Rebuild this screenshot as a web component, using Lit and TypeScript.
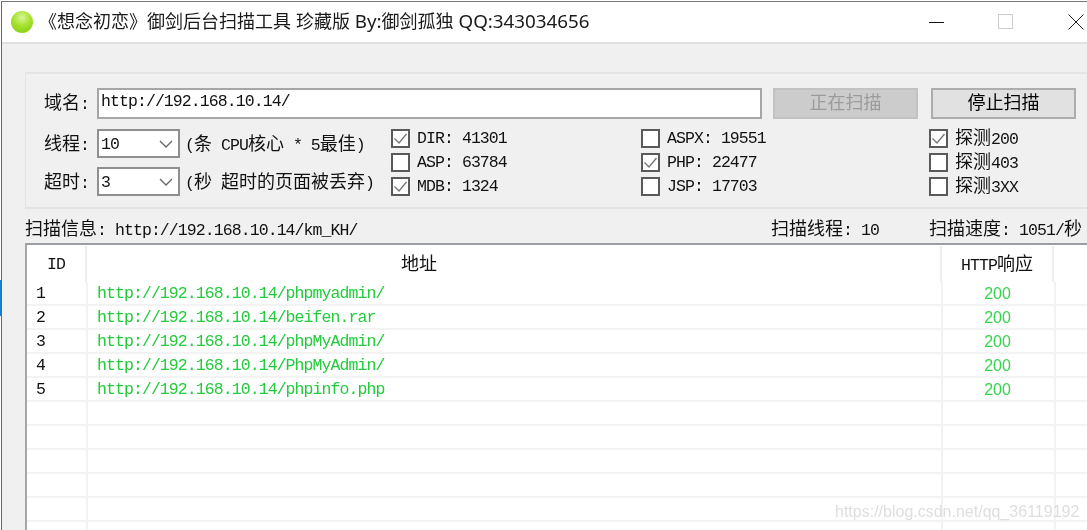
import { LitElement, html, css, svg } from "lit";
import { customElement } from "lit/decorators.js";

const split = (s: string, latin: string) =>
  s.split(/([\x00-\x7f]+)/).filter(Boolean).map((r) =>
    /^[\x00-\x7f]/.test(r) ? html`<span class=${latin}>${r}</span>` : html`<span class="c">${r}</span>`
  );
const runs = (s: string) => html`<span class="run">${split(s, "l")}</span>`;
const titleRuns = (s: string) => html`<span class="run">${split(s, "tl")}</span>`;

const chevron = svg`<svg class="chev" width="14" height="8" viewBox="0 0 14 8"><path d="M1 1 L7 7 L13 1" fill="none" stroke="#666" stroke-width="1.3"/></svg>`;
const tick = svg`<svg width="15" height="15" viewBox="0 0 15 15"><path d="M1.5 7.5 L6 12 L13.5 3" fill="none" stroke="#777" stroke-width="1.4"/></svg>`;

const rows = [
  ["1", "http://192.168.10.14/phpmyadmin/", "200"],
  ["2", "http://192.168.10.14/beifen.rar", "200"],
  ["3", "http://192.168.10.14/phpMyAdmin/", "200"],
  ["4", "http://192.168.10.14/PhpMyAdmin/", "200"],
  ["5", "http://192.168.10.14/phpinfo.php", "200"],
  ...Array.from({ length: 6 }, () => ["", "", ""]),
];

@customElement("app-root")
export class AppRoot extends LitElement {
  static styles = css`
    :host { display: block; position: relative; width: 1087px; height: 530px; overflow: hidden; background: #fff; }
    .run { display: block; line-height: 20px; font-size: 15px; white-space: pre; }
    .l { font: 16.5px/1 "Liberation Mono", monospace; letter-spacing: -0.92px; }
    .c { font: 18px/1 "Noto Sans CJK SC", sans-serif; }
    .tl { font: 18.8px/1 "Noto Sans", sans-serif; }
    .window { margin-left: 1px; border-left: 1px solid #666; border-top: 1px solid #777; margin-top: 1px; height: 529px; background: #f0f0f0; box-sizing: border-box; color: #111; line-height: 24px; filter: blur(0.35px); }
    .edge { position: absolute; left: 0; top: 280px; width: 1px; height: 36px; background: #1a7fd0; }
    .title { height: 40px; background: #fff; border-bottom: 2px solid #e0e0e0; display: flex; align-items: center; padding-left: 9px; box-sizing: content-box; }
    .orb { width: 22px; height: 22px; border-radius: 50%; background: radial-gradient(circle at 50% 30%, #d8f59a 0%, #a6e22e 45%, #7ec90e 100%); flex: none; }
    .title-text { margin-left: 6px; color: #1a1a1a; white-space: pre; flex: none; width: 879px; }
    .ctl { flex: none; display: flex; align-items: center; justify-content: center; }
    .ctl svg { display: block; }
    .min { margin-left: 11px; }
    .max { margin-left: 53px; }
    .close { margin-left: 54px; }
    .panel { margin: 28px 0 0 23px; height: 137px; border: 2px solid #e4e4e4; border-right: 0; border-left-width: 1px; padding: 14px 0 0 18px; box-sizing: border-box; }
    .top { display: flex; align-items: center; height: 31px; }
    .top .label .run, .top .btn .run { margin-top: -2px; }
    .label { width: 53px; flex: none; white-space: pre; }
    .input { width: 665px; height: 31px; flex: none; border: 2px solid #a6a6a6; background: #fff; box-sizing: border-box; padding: 1px 0 0 2px; }
    .btn { width: 145px; height: 31px; flex: none; box-sizing: border-box; border: 2px solid #adadad; background: #e1e1e1; display: flex; align-items: center; justify-content: center; color: #000; }
    .btn.off { margin-left: 11px; background: #cccccc; border-color: #c2c2c2; color: #9b9b9b; }
    .btn.on { margin-left: 13px; }
    .opts { display: flex; margin-top: 10px; }
    .fields { width: 347px; flex: none; display: flex; flex-direction: column; gap: 9px; }
    .field { display: flex; align-items: center; height: 29px; white-space: pre; }
    .select { width: 83px; height: 29px; flex: none; box-sizing: border-box; border: 2px solid #8f8f8f; background: #fff; display: flex; align-items: center; justify-content: space-between; padding: 0 5px 0 2px; margin-right: 5px; }
    .chev { display: block; }
    .col { display: flex; flex-direction: column; gap: 5px; flex: none; }
    .col.a { width: 250px; }
    .col.b { width: 288px; }
    .cb { display: flex; align-items: center; height: 19px; white-space: pre; }
    .cb .run { margin-top: -2px; }
    .box { width: 19px; height: 19px; flex: none; box-sizing: border-box; border: 2px solid #5a5a5a; background: #fff; margin-right: 7px; display: flex; align-items: center; justify-content: center; }
    .box svg { display: block; }
    .info { display: grid; grid-template-columns: 746px 158px 1fr; margin-left: 23px; height: 34px; align-items: center; white-space: pre; padding-top: 5px; box-sizing: border-box; }
    .table { margin-left: 23px; border-top: 2px solid #9a9ea2; border-left: 2px solid #a4a8ac; background: #fff; height: 300px; overflow: hidden; }
    .head { display: grid; grid-template-columns: 60px 855px 112px 1fr; height: 37px; }
    .head > div { border-right: 2px solid #eeeeee; display: flex; align-items: center; justify-content: center; margin-top: 1px; box-sizing: border-box; }
    .head > div:last-child { border-right: 0; }
    .head .addr { justify-content: flex-start; padding-left: 314px; }
    .row { display: grid; grid-template-columns: 61px 855px 113px 1fr; height: 24px; border-bottom: 2px solid #f3f3f3; box-sizing: border-box; white-space: pre; }
    .row > div { border-right: 2px solid #f3f3f3; padding-left: 9px; line-height: 24px; box-sizing: border-box; }
    .row > div:last-child { border-right: 0; }
    .row .l { line-height: 24px; }
    .row .url { color: #22cc3c; }
    .row .status { padding: 0 2px 0 0; text-align: center; color: #3ad04f; font: 16px/23px "Liberation Sans", sans-serif; }
    .mark { position: absolute; left: 835px; top: 503px; font: 16px "Liberation Sans", sans-serif; color: rgba(190, 190, 190, 0.5); white-space: pre; filter: blur(0.4px); }
  `;

  private cb(text: string, checked = false) {
    return html`<div class="cb"><div class="box">${checked ? tick : ""}</div>${runs(text)}</div>`;
  }

  render() {
    return html`
      <div class="edge"></div>
      <div class="window">
        <div class="title">
          <div class="orb"></div>
          <div class="title-text">${titleRuns("《想念初恋》御剑后台扫描工具 珍藏版 By:御剑孤独 QQ:343034656")}</div>
          <div class="ctl min"><svg width="16" height="16" viewBox="0 0 16 16"><path d="M0 8.5H15" stroke="#111" stroke-width="1"/></svg></div>
          <div class="ctl max"><svg width="16" height="16" viewBox="0 0 16 16"><rect x="0.5" y="0.5" width="14" height="14" fill="none" stroke="#ccc"/></svg></div>
          <div class="ctl close"><svg width="16" height="16" viewBox="0 0 16 16"><path d="M0.5 0.5L15.5 15.5M15.5 0.5L0.5 15.5" stroke="#222" stroke-width="1"/></svg></div>
        </div>
        <div class="panel">
          <div class="top">
            <div class="label">${runs("域名:")}</div>
            <div class="input">${runs("http://192.168.10.14/")}</div>
            <div class="btn off">${runs("正在扫描")}</div>
            <div class="btn on">${runs("停止扫描")}</div>
          </div>
          <div class="opts">
            <div class="fields">
              <div class="field">
                <div class="label">${runs("线程:")}</div>
                <div class="select">${runs("10")}${chevron}</div>
                ${runs("(条 CPU核心 * 5最佳)")}
              </div>
              <div class="field">
                <div class="label">${runs("超时:")}</div>
                <div class="select">${runs("3")}${chevron}</div>
                ${runs("(秒 超时的页面被丢弃)")}
              </div>
            </div>
            <div class="col a">
              ${this.cb("DIR: 41301", true)}${this.cb("ASP: 63784")}${this.cb("MDB: 1324", true)}
            </div>
            <div class="col b">
              ${this.cb("ASPX: 19551")}${this.cb("PHP: 22477", true)}${this.cb("JSP: 17703")}
            </div>
            <div class="col">
              ${this.cb("探测200", true)}${this.cb("探测403")}${this.cb("探测3XX")}
            </div>
          </div>
        </div>
        <div class="info">
          <div>${runs("扫描信息: http://192.168.10.14/km_KH/")}</div>
          <div>${runs("扫描线程: 10")}</div>
          <div>${runs("扫描速度: 1051/秒")}</div>
        </div>
        <div class="table">
          <div class="head">
            <div>${runs("ID")}</div>
            <div class="addr">${runs("地址")}</div>
            <div>${runs("HTTP响应")}</div>
            <div></div>
          </div>
          ${rows.map(
            (r) => html`<div class="row">
              <div class="l">${r[0]}</div>
              <div class="l url">${r[1]}</div>
              <div class="status">${r[2]}</div>
              <div></div>
            </div>`
          )}
        </div>
      </div>
      <div class="mark">https://blog.csdn.net/qq_36119192</div>
    `;
  }
}
